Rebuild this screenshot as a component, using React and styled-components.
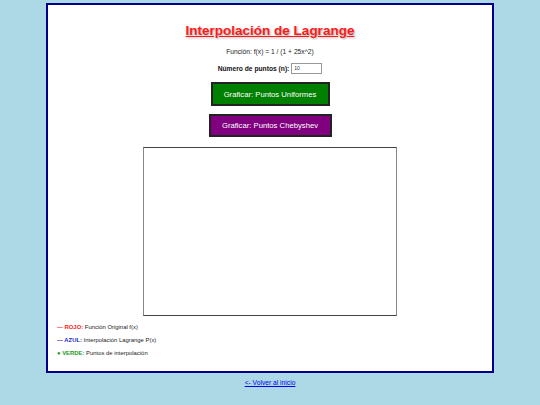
import React from 'react';
import styled, { createGlobalStyle } from 'styled-components';

const GlobalStyle = createGlobalStyle`
  html, body {
    margin: 0;
    padding: 0;
    background: #add8e6;
    font-family: "Liberation Sans", Arial, sans-serif;
  }
`;

const Page = styled.div`
  padding-top: 3px;
  display: flex;
  flex-direction: column;
  align-items: center;
`;

const Card = styled.div`
  width: 444px;
  height: 366px;
  background: #fff;
  border: 2px solid #00008b;
  display: flex;
  flex-direction: column;
  align-items: center;
`;

const Title = styled.h1`
  margin: 16px 0 0;
  font-size: 13.5px;
  line-height: 20px;
  font-weight: bold;
  color: #ff1a1a;
  text-decoration: underline;
  text-shadow: 1px 1px 2px #aaa;
`;

const Formula = styled.p`
  margin: 6px 0 0;
  font-size: 6.7px;
  line-height: 10px;
  color: #222;
`;

const InputRow = styled.div`
  margin-top: 5px;
  height: 12px;
  display: flex;
  align-items: center;
  gap: 2px;
  font-size: 6.7px;
  font-weight: bold;
  color: #111;
`;

const NumInput = styled.input`
  width: 27px;
  height: 9px;
  padding: 0 0 0 2px;
  border: 1px solid #999;
  font-family: "Liberation Sans", Arial, sans-serif;
  font-size: 5px;
  color: #333;
  outline: none;
`;

const PlotButton = styled.button`
  margin-top: ${p => p.$gap}px;
  width: ${p => p.$w}px;
  height: ${p => p.$h}px;
  background: ${p => p.$bg};
  color: #fff;
  border: 2px solid #222;
  font-family: "Liberation Sans", Arial, sans-serif;
  font-size: 7.7px;
  padding: 0;
  cursor: pointer;
`;

const Canvas = styled.div`
  margin-top: 10px;
  width: 252px;
  height: 167px;
  border: 1px solid #444;
  border-left-color: #888;
  border-right-color: #888;
  background: #fff;
`;

const Legend = styled.div`
  align-self: stretch;
  padding-left: 9px;
  margin-top: 6px;
  display: flex;
  flex-direction: column;
  gap: 3px;
`;

const LegendItem = styled.div`
  font-size: 5.9px;
  line-height: 10px;
  color: #222;
`;

const Key = styled.span`
  font-weight: bold;
  color: ${p => p.$color};
`;

const BackLink = styled.a`
  margin-top: 5px;
  font-size: 6.7px;
  line-height: 10px;
  color: #0000ee;
  text-decoration: underline;
`;

export default function App() {
  return (
    <>
      <GlobalStyle />
      <Page>
        <Card>
          <Title>Interpolación de Lagrange</Title>
          <Formula>Función: f(x) = 1 / (1 + 25x^2)</Formula>
          <InputRow>
            <label htmlFor="n">Número de puntos (n):</label>
            <NumInput id="n" type="text" defaultValue="10" />
          </InputRow>
          <PlotButton $gap={8} $w={119} $h={24} $bg="#008000">Graficar: Puntos Uniformes</PlotButton>
          <PlotButton $gap={8} $w={123} $h={23} $bg="#800080">Graficar: Puntos Chebyshev</PlotButton>
          <Canvas />
          <Legend>
            <LegendItem><Key $color="#ff1a1a">— ROJO:</Key> Función Original f(x)</LegendItem>
            <LegendItem><Key $color="#2222cc">— AZUL:</Key> Interpolación Lagrange P(x)</LegendItem>
            <LegendItem><Key $color="#1a9a1a">● VERDE:</Key> Puntos de interpolación</LegendItem>
          </Legend>
        </Card>
        <BackLink href="#">&lt;- Volver al inicio</BackLink>
      </Page>
    </>
  );
}
